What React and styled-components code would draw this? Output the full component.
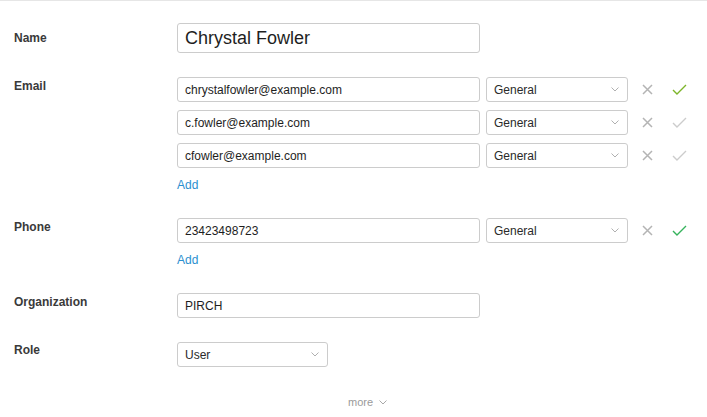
import React from 'react';
import styled, { createGlobalStyle } from 'styled-components';

const GlobalStyle = createGlobalStyle`
  body {
    margin: 0;
    background: #fff;
    font-family: "Liberation Sans", Arial, sans-serif;
  }
`;

const Page = styled.div`
  width: 707px;
  height: 417px;
  box-sizing: border-box;
  border-top: 1px solid #e6e6e6;
  padding: 22px 0 0 14px;
  overflow: hidden;
`;

const Row = styled.div`
  display: flex;
  align-items: flex-start;
  margin-bottom: ${({ gap }) => gap}px;
`;

const Label = styled.div`
  width: 163px;
  flex: none;
  font-size: 12px;
  line-height: 16px;
  font-weight: bold;
  color: #3a3a3a;
  padding-top: ${({ offset }) => offset}px;
`;

const Fields = styled.div`
  display: flex;
  flex-direction: column;
  gap: 8px;
`;

const FieldLine = styled.div`
  display: flex;
  align-items: center;
`;

const Input = styled.div`
  box-sizing: border-box;
  width: ${({ w }) => w || 303}px;
  height: ${({ big }) => (big ? 30 : 25)}px;
  border: 1px solid #cccccc;
  border-radius: 3px;
  padding: 0 7px;
  display: flex;
  align-items: center;
  font-size: ${({ big }) => (big ? 18 : 12)}px;
  color: #1e1e1e;
  background: #fff;
`;

const Select = styled(Input)`
  justify-content: space-between;
  padding: 0 8px 0 7px;
  margin-left: ${({ ml }) => ml || 0}px;
  color: #2a2a2a;
`;

const IconBtn = styled.span`
  display: inline-flex;
  align-items: center;
  justify-content: center;
  margin-left: ${({ ml }) => ml}px;
  width: ${({ w }) => w}px;
`;

const AddLink = styled.a`
  margin-top: 1px;
  font-size: 12px;
  line-height: 16px;
  color: #2b8fcf;
  text-decoration: none;
  cursor: pointer;
`;

const Footer = styled.div`
  display: flex;
  justify-content: center;
  align-items: center;
  padding-left: 14px;
  margin-top: 29px;
  gap: 6px;
  font-size: 11px;
  color: #9a9a9a;
`;

const Chevron = ({ color = '#b0b0b0' }) => (
  <svg width="8" height="5" viewBox="0 0 8 5">
    <polyline points="0.5,0.5 4,4 7.5,0.5" fill="none" stroke={color} strokeWidth="1" />
  </svg>
);

const Cross = () => (
  <svg width="11" height="11" viewBox="0 0 11 11">
    <path d="M1 1 L10 10 M10 1 L1 10" stroke="#b4b4b4" strokeWidth="1.5" fill="none" />
  </svg>
);

const Check = ({ color }) => (
  <svg width="15" height="11" viewBox="0 0 15 11">
    <polyline points="1,6 5,10 14,1" fill="none" stroke={color} strokeWidth="1.4" />
  </svg>
);

const TypeSelect = () => (
  <Select w={142} ml={6}>
    General
    <Chevron />
  </Select>
);

const MultiLine = ({ value, check }) => (
  <FieldLine>
    <Input>{value}</Input>
    <TypeSelect />
    <IconBtn ml={14} w={11}>
      <Cross />
    </IconBtn>
    <IconBtn ml={19} w={15}>
      <Check color={check} />
    </IconBtn>
  </FieldLine>
);

const emails = [
  { value: 'chrystalfowler@example.com', check: '#7db52a' },
  { value: 'c.fowler@example.com', check: '#cccccc' },
  { value: 'cfowler@example.com', check: '#cccccc' },
];

const App = () => (
  <>
    <GlobalStyle />
    <Page>
      <Row gap={24}>
        <Label offset={7}>Name</Label>
        <Input big>Chrystal Fowler</Input>
      </Row>
      <Row gap={25}>
        <Label offset={1}>Email</Label>
        <Fields>
          {emails.map((e) => (
            <MultiLine key={e.value} value={e.value} check={e.check} />
          ))}
          <AddLink>Add</AddLink>
        </Fields>
      </Row>
      <Row gap={25}>
        <Label offset={1}>Phone</Label>
        <Fields>
          <MultiLine value="23423498723" check="#36b35c" />
          <AddLink>Add</AddLink>
        </Fields>
      </Row>
      <Row gap={24}>
        <Label offset={1}>Organization</Label>
        <Input>PIRCH</Input>
      </Row>
      <Row gap={0}>
        <Label offset={0}>Role</Label>
        <Select w={151}>
          User
          <Chevron />
        </Select>
      </Row>
      <Footer>
        more
        <Chevron color="#a8a8a8" />
      </Footer>
    </Page>
  </>
);

export default App;
